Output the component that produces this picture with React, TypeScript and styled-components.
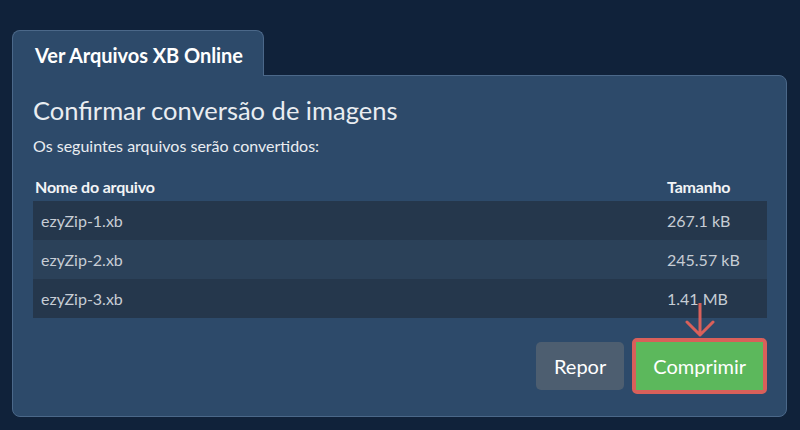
import styled, { createGlobalStyle } from "styled-components";

const GlobalStyle = createGlobalStyle`
  html, body {
    margin: 0;
    padding: 0;
    background: #10223a;
  }
  body {
    font-family: Lato, "Open Sans", sans-serif;
  }
`;

const Page = styled.div`
  width: 800px;
  height: 430px;
  box-sizing: border-box;
  padding: 30px 13px 0 12px;
`;

const Tab = styled.div`
  display: inline-block;
  position: relative;
  z-index: 1;
  height: 46px;
  box-sizing: border-box;
  padding: 3px 22px 0 22px;
  margin-bottom: -1px;
  width: 252px;
  background: #2d4a6a;
  border: 1px solid #4b6889;
  border-bottom: none;
  border-radius: 8px 8px 0 0;
  color: #ffffff;
  font-size: 20px;
  font-weight: 700;
  line-height: 43px;
  letter-spacing: -0.05px;
  white-space: nowrap;
`;

const Panel = styled.section`
  position: relative;
  background: #2d4a6a;
  border: 1px solid #4b6889;
  border-radius: 0 8px 8px 8px;
  padding: 19px 19px 22px 20px;
`;

const Heading = styled.h1`
  margin: 0;
  font-size: 25.5px;
  line-height: 31px;
  font-weight: 400;
  color: #e9edf1;
`;

const Subtitle = styled.p`
  margin: 10px 0 0;
  font-size: 16px;
  line-height: 20px;
  color: #e9edf1;
`;

const FileTable = styled.table`
  width: 100%;
  margin-top: 21px;
  border-collapse: collapse;
`;

const HeadCell = styled.th<{ $pad: number; $width?: number }>`
  text-align: left;
  font-size: 16px;
  font-weight: 700;
  line-height: 20px;
  color: #f2f4f6;
  padding: 0 8px 4px ${({ $pad }) => $pad}px;
  width: ${({ $width }) => ($width ? `${$width}px` : "auto")};
  letter-spacing: -0.2px;
`;

const Row = styled.tr<{ $odd: boolean }>`
  background: ${({ $odd }) => ($odd ? "#25374c" : "#2b4159")};
`;

const Cell = styled.td`
  height: 39px;
  padding: 0 8px;
  font-size: 16px;
  line-height: 39px;
  color: #c7cdd5;
`;

const Actions = styled.div`
  display: flex;
  justify-content: flex-end;
  align-items: center;
  gap: 8px;
  margin-top: 20px;
`;

const Button = styled.button<{ $variant: "reset" | "primary" }>`
  height: 48px;
  border: none;
  padding: 0 ${({ $variant }) => ($variant === "reset" ? "18px" : "17px")};
  border-radius: ${({ $variant }) => ($variant === "reset" ? "5px" : "0")};
  background: ${({ $variant }) => ($variant === "reset" ? "#4d5e70" : "#5cb85c")};
  color: #ffffff;
  font-family: Lato, "Open Sans", sans-serif;
  font-size: 20px;
  line-height: 48px;
  cursor: pointer;
`;

const Highlight = styled.span`
  position: relative;
  display: inline-flex;
  border: 4px solid #d9605a;
  border-radius: 5px;
`;

const Arrow = styled.svg`
  position: absolute;
  left: 50%;
  bottom: calc(100% + 5px);
  transform: translateX(-50%);
`;

const files = [
  { name: "ezyZip-1.xb", size: "267.1 kB" },
  { name: "ezyZip-2.xb", size: "245.57 kB" },
  { name: "ezyZip-3.xb", size: "1.41 MB" },
];

export default function App() {
  return (
    <>
      <GlobalStyle />
      <Page>
        <Tab>Ver Arquivos XB Online</Tab>
        <Panel>
          <Heading>Confirmar conversão de imagens</Heading>
          <Subtitle>Os seguintes arquivos serão convertidos:</Subtitle>
          <FileTable>
            <thead>
              <tr>
                <HeadCell $pad={2}>Nome do arquivo</HeadCell>
                <HeadCell $pad={8} $width={92}>
                  Tamanho
                </HeadCell>
              </tr>
            </thead>
            <tbody>
              {files.map((file, i) => (
                <Row key={file.name} $odd={i % 2 === 0}>
                  <Cell>{file.name}</Cell>
                  <Cell>{file.size}</Cell>
                </Row>
              ))}
            </tbody>
          </FileTable>
          <Actions>
            <Button $variant="reset">Repor</Button>
            <Highlight>
              <Arrow width="30" height="34" viewBox="0 0 30 34" aria-hidden="true">
                <path
                  d="M15 0 V32 M2 19 L15 32 L28 19"
                  fill="none"
                  stroke="#d9605a"
                  strokeWidth="3"
                  strokeLinecap="round"
                  strokeLinejoin="round"
                />
              </Arrow>
              <Button $variant="primary">Comprimir</Button>
            </Highlight>
          </Actions>
        </Panel>
      </Page>
    </>
  );
}
